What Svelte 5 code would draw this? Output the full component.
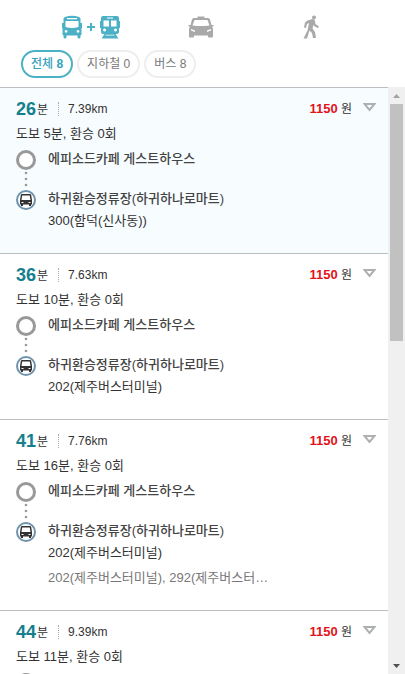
<script>
  const filters = [
    { name: '전체', count: 8 },
    { name: '지하철', count: 0 },
    { name: '버스', count: 8 }
  ];
  let selectedFilter = $state(0);
  let selectedRoute = $state(0);

  const start = '에피소드카페 게스트하우스';
  const stop = '하귀환승정류장(하귀하나로마트)';
  const routes = [
    { minutes: 26, distance: '7.39km', walk: 5, fare: 1150, line: '300(함덕(신사동))' },
    { minutes: 36, distance: '7.63km', walk: 10, fare: 1150, line: '202(제주버스터미널)' },
    { minutes: 41, distance: '7.76km', walk: 16, fare: 1150, line: '202(제주버스터미널)', others: '202(제주버스터미널), 292(제주버스터미널)' },
    { minutes: 44, distance: '9.39km', walk: 11, fare: 1150, line: '202(제주버스터미널)' }
  ];
</script>

<div class="panel">
  <header>
    <nav>
      <button class="mode active" aria-label="대중교통">
        <svg width="60" height="26" viewBox="0 0 60 26" fill="currentColor">
          <path fill-rule="evenodd" d="M4 3Q11 .5 18 3Q19.500 3.500 19.500 5V9h1.500v5h-.5v7h-1v2q0 1.500-1.500 1.500t-1.500-1.500V21.500h-11v1.500q0 1.500-1.500 1.500t-1.500-1.500V21h-1v-7H1V9h1.500V5Q2.500 3.500 4 3ZM6 4v1.200h10V4ZM4.500 7v6q6.500 2 13 0V7ZM5 16a1.400 1.400 0 1 0 .1 0ZM17 16a1.400 1.400 0 1 0 .1 0Z" />
          <path d="M29 9h2v3h3v2h-3v3h-2v-3h-3v-2h3Z" />
          <path fill-rule="evenodd" d="M42 2h14q2 0 2 2v3h1v7h-1v4q0 2-2 2h-1.500l3 4.500H40.500l3-4.500H42q-2 0-2-2v-4h-1V7h1V4q0-2 2-2ZM46 3.500v1h6v-1ZM42.500 6.500v6h5.500v-6ZM50 6.500v6h5.500v-6ZM43.500 14.500a1.500 1.500 0 1 0 .1 0ZM54.500 14.500a1.500 1.500 0 1 0 .1 0ZM44.500 21.500h9v-.8h-9Z" />
        </svg>
      </button>
      <button class="mode" aria-label="택시">
        <svg width="26" height="24" viewBox="0 0 26 24" fill="currentColor">
          <path fill-rule="evenodd" d="M9.500 1.500h7v1.500H20q1.500 0 2 1.500L23.500 10h2v1.500H24l1 2.500v7.500q0 1-1 1h-3q-1 0-1-1V20.500H6v1q0 1-1 1H2q-1 0-1-1V14l1-2.500H.500V10H2.500L4 4.500Q4.500 3 6 3h3.500ZM6.500 5L4.500 10.500q8.500 1 17 0L19.500 5ZM3 14v1.500l4 1.500v-1.500ZM23 14l-4 1.500V17l4-1.500Z" />
        </svg>
      </button>
      <button class="mode" aria-label="도보">
        <svg width="18" height="24" viewBox="0 0 18 24" fill="currentColor">
          <circle cx="12" cy="2.500" r="2" />
          <path d="M5.500 5.500l5-1.500q2 0 2.500 2l.500 3 3.500 2.500-1 1.500-4-2-.500-1.500-1 4 2.500 3.500 1 6h-3l-1-5-2.500-2.500L5 23.500H1.500l4-8L7 8 5 9l-1 4-2-.500 1-5Z" />
        </svg>
      </button>
    </nav>
    <div class="filters">
      {#each filters as f, i}
        <button class="chip" class:on={selectedFilter === i} onclick={() => (selectedFilter = i)}>{f.name} <span class="count">{f.count}</span></button>
      {/each}
    </div>
  </header>

  <div class="body">
    <ul class="list">
      {#each routes as r, i}
        <li class="route" class:selected={selectedRoute === i}>
          <div class="head">
            <strong class="time">{r.minutes}</strong><span class="unit">분</span>
            <span class="distance">{r.distance}</span>
            <span class="fare"><b>{r.fare}</b> 원</span>
            <button class="toggle" aria-label="상세보기" onclick={() => (selectedRoute = i)}>
              <svg width="13" height="9" viewBox="0 0 13 9"><path d="M1.500 1h10L6.500 7Z" fill="none" stroke="#adb0b2" stroke-width="2" /></svg>
            </button>
          </div>
          <p class="summary">도보 {r.walk}분, 환승 0회</p>
          <ol class="stops">
            <li class="stop first">
              <span class="track">
                <span class="ring"></span>
                <svg width="4" height="16" viewBox="0 0 4 16" fill="#999"><circle cx="2" cy="2" r="1.300" /><circle cx="2" cy="8" r="1.300" /><circle cx="2" cy="14" r="1.300" /></svg>
              </span>
              <span class="name">{start}</span>
            </li>
            <li class="stop">
              <span class="track">
                <svg width="20" height="20" viewBox="0 0 20 20">
                  <circle cx="10" cy="10" r="9" fill="#fff" stroke="#6f93ad" stroke-width="2" />
                  <path fill="#333" fill-rule="evenodd" d="M6 4h8q1 0 1.200 1l.8 5v4.500h-1V16h-2v-1.500H7V16H5v-1.500H4V10l.800-5Q5 4 6 4ZM6.200 5.500L5.500 10h9l-.7-4.500ZM5.500 12v1h2v-1ZM12.500 12v1h2v-1Z" />
                </svg>
              </span>
              <div class="info">
                <span class="name">{stop}</span>
                <p class="line">{r.line}</p>
                {#if r.others}<p class="others">{r.others}</p>{/if}
              </div>
            </li>
          </ol>
        </li>
      {/each}
    </ul>
    <div class="scrollbar" aria-hidden="true">
      <svg width="17" height="17" viewBox="0 0 17 17"><path d="M5 11h7L8.500 7Z" fill="#a3a3a3" /></svg>
      <div class="rail"><div class="thumb"></div></div>
      <svg width="17" height="17" viewBox="0 0 17 17"><path d="M5 7h7l-3.500 4Z" fill="#505050" /></svg>
    </div>
  </div>
</div>

<style>
  .panel {
    display: flex;
    flex-direction: column;
    height: 100vh;
    overflow: hidden;
    background: #fff;
    color: #333;
    font: 13px/18px "Liberation Sans", "Noto Sans CJK KR", sans-serif;
  }
  button {
    margin: 0;
    padding: 0;
    border: 0;
    background: none;
    font: inherit;
    color: inherit;
    cursor: pointer;
  }
  svg { display: block; flex: none; }
  ul, ol, p { margin: 0; padding: 0; list-style: none; }
  header { flex: none; padding-bottom: 9px; }
  nav {
    display: grid;
    grid-template-columns: repeat(3, 1fr);
    height: 50px;
    padding: 0 39px 0 37px;
    box-sizing: border-box;
  }
  .mode {
    display: flex;
    justify-content: center;
    align-items: center;
    padding-top: 4px;
    color: #a9a9a9;
  }
  .mode.active { padding-right: 1px; color: #4db1c6; }
  .filters { display: flex; gap: 4px; padding-left: 21px; }
  .chip {
    height: 28px;
    padding: 0 8px;
    border: 2px solid #eee;
    border-radius: 14px;
    font-size: 12px;
    color: #777;
  }
  .chip.on { border-color: #4db1c6; color: #36a2bb; font-weight: 500; }
  .chip.on .count { font-weight: 700; }
  .body { display: flex; flex: 1; min-height: 0; }
  .list { flex: 1; min-width: 0; overflow: hidden; }
  .route { padding: 9px 12px 20px 16px; border-top: 1px solid #bbbfc3; }
  .selected { background: #f7fcff; }
  .head { display: flex; align-items: center; height: 24px; font-size: 12px; }
  .time { font-size: 18px; color: #14808d; }
  .unit { padding: 2px 10px 0 1px; }
  .distance { padding-left: 9px; border-left: 1px dotted #aaa; line-height: 14px; }
  .fare { margin-left: auto; }
  .fare b { font-size: 13px; color: #e3131b; }
  .toggle { padding: 0 0 4px 11px; }
  .summary { line-height: 25px; }
  .stops { padding-top: 4px; }
  .stop { display: flex; gap: 12px; }
  .first { height: 40px; }
  .track { display: flex; flex-direction: column; align-items: center; gap: 1px; }
  .ring {
    width: 20px;
    height: 20px;
    box-sizing: border-box;
    border: 3px solid #999;
    border-radius: 50%;
    background: #fff;
  }
  .info { flex: 1; min-width: 0; }
  .name { display: block; font-weight: 500; color: #444; }
  .line { line-height: 25px; }
  .others {
    max-width: 222px;
    overflow: hidden;
    text-overflow: ellipsis;
    white-space: nowrap;
    line-height: 25px;
    color: #777;
  }
  .scrollbar { display: flex; flex-direction: column; width: 17px; background: #f0f0f0; }
  .rail { flex: 1; padding: 0 2px; }
  .thumb { height: calc(100% * 3 / 7); background: #c1c1c1; }
</style>
